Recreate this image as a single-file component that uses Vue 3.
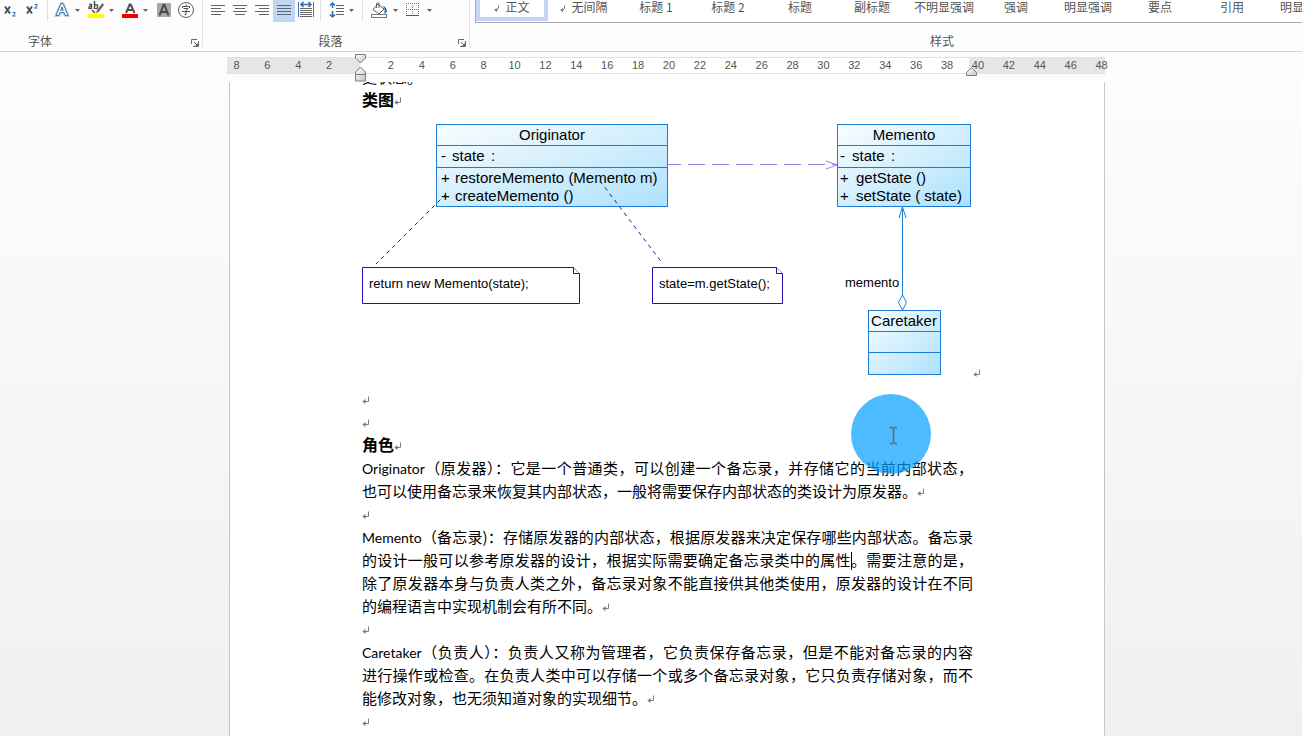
<script setup>
const styles = [
  { name: '正文', mark: true, active: true },
  { name: '无间隔', mark: true },
  { name: '标题 1' },
  { name: '标题 2' },
  { name: '标题' },
  { name: '副标题' },
  { name: '不明显强调' },
  { name: '强调' },
  { name: '明显强调' },
  { name: '要点' },
  { name: '引用' },
  { name: '明显引用' },
]

const ticks = Array.from({ length: 29 }, (_, i) => (i === 4 ? '' : Math.abs(i - 4) * 2))
</script>

<template>
  <div class="app">
    <svg class="defs" width="0" height="0" aria-hidden="true">
      <defs>
        <symbol id="ret" viewBox="0 0 8 9">
          <path d="M6.5 0.5V5.5H2" fill="none" stroke="#7d7d7d" />
          <path d="M0.3 5.5L3.5 3V8Z" fill="#7d7d7d" />
        </symbol>
        <linearGradient id="sky" x1="0" y1="0" x2="1" y2="1">
          <stop offset="0" stop-color="#fafdff" />
          <stop offset="0.5" stop-color="#d3effd" />
          <stop offset="1" stop-color="#ade1fe" />
        </linearGradient>
        <linearGradient id="grip" x1="0" y1="0" x2="1" y2="1">
          <stop offset="0" stop-color="#ffffff" />
          <stop offset="1" stop-color="#c4c4c4" />
        </linearGradient>
      </defs>
    </svg>

    <header class="ribbon">
      <section class="group font-group">
        <div class="tools">
          <button class="tool" aria-label="下标">
            <svg width="22" height="22"><path d="M5 6.5L10 13.500M10 6.500L5 13.500" stroke="#505050" stroke-width="2" /><path d="M12.500 12.500H15V14L12.500 16H15.500" fill="none" stroke="#2f6ea8" /></svg>
          </button>
          <button class="tool" aria-label="上标">
            <svg width="22" height="22"><path d="M5 6.500L10 13.500M10 6.500L5 13.500" stroke="#505050" stroke-width="2" /><path d="M12.500 4.500H15V6L12.500 8H15.500" fill="none" stroke="#2f6ea8" /></svg>
          </button>
          <span class="sep sep-font"></span>
          <button class="tool" aria-label="文本效果">
            <svg width="22" height="22"><path d="M6 15.500L11 3.500H13L18 15.500H15L14 12.500H10L9 15.500ZM10.800 10.300H13.200L12 6.800Z" fill="#fff" stroke="#b9d6f2" stroke-width="3" /><path d="M6 15.500L11 3.500H13L18 15.500H15L14 12.500H10L9 15.500ZM10.800 10.300H13.200L12 6.800Z" fill="#fff" stroke="#3f78ae" /></svg>
          </button>
          <button class="caret" aria-label="文本效果选项"><svg width="12" height="22"><path d="M3 9H8L5.500 12Z" /></svg></button>
          <button class="tool" aria-label="突出显示">
            <svg width="22" height="22"><path d="M5 4.500H7.500V9M7.500 6.500H6Q4.500 7 5 8.500Q6 9 7.500 8M10.500 1V9M10.500 5.500Q12.500 4 13.500 5.500V7.500Q12.500 9.500 10.500 8" fill="none" stroke="#505050" stroke-width="1.400" /><path d="M18.500 3L20 5L15 11.500L12 13.500L13 10Z" fill="#686868" /><path d="M8 10L11 13" stroke="#777" stroke-width="2" /><rect x="4" y="14" width="16" height="4" fill="#ffff00" /></svg>
          </button>
          <button class="caret" aria-label="突出显示选项"><svg width="12" height="22"><path d="M3 9H8L5.500 12Z" /></svg></button>
          <button class="tool" aria-label="字体颜色">
            <svg width="22" height="22"><path d="M8 13L11.700 4.500H12.700L16.500 13M9.500 10H15" fill="none" stroke="#505050" stroke-width="2" /><rect x="4" y="14" width="16" height="4" fill="#f00000" /></svg>
          </button>
          <button class="caret" aria-label="字体颜色选项"><svg width="12" height="22"><path d="M3 9H8L5.500 12Z" /></svg></button>
          <button class="tool" aria-label="字符底纹">
            <svg width="22" height="22"><rect x="5" y="3" width="14" height="14" fill="#a9a9a9" /><path d="M7.500 15.500L11.500 5H12.500L16.500 15.500M9 12H15" fill="none" stroke="#484848" stroke-width="2" /></svg>
          </button>
          <button class="tool" aria-label="带圈字符">
            <svg width="22" height="22"><circle cx="12" cy="10" r="7.500" fill="none" stroke="#5b5b5b" /><path d="M12 4.500V6M8.500 8V6.500H15.500V8M9.500 8.500H14L12 10.500V14.500H10.500M8 11.500H16" fill="none" stroke="#505050" /></svg>
          </button>
        </div>
        <div class="caption">
          <span class="name">字体</span>
          <button class="launch" aria-label="字体设置"><svg width="8" height="8"><path d="M0.500 5V0.500H6M3 3L6 6" fill="none" stroke="#6a6a6a" /><path d="M7.500 2V7.500H2" fill="none" stroke="#6a6a6a" /><path d="M7 4V7H4Z" fill="#6a6a6a" /></svg></button>
        </div>
      </section>

      <section class="group para-group">
        <div class="tools">
          <button class="tool" aria-label="左对齐"><svg width="22" height="22"><path d="M4 5.500H18M4 8.500H14M4 11.500H18M4 14.500H14" stroke="#666" /></svg></button>
          <button class="tool" aria-label="居中"><svg width="22" height="22"><path d="M4 5.500H18M6 8.500H16M4 11.500H18M6 14.500H16" stroke="#666" /></svg></button>
          <button class="tool" aria-label="右对齐"><svg width="22" height="22"><path d="M4 5.500H18M8 8.500H18M4 11.500H18M8 14.500H18" stroke="#666" /></svg></button>
          <button class="tool on" aria-label="两端对齐"><svg width="22" height="22"><path d="M4 5.500H18M4 8.500H18M4 11.500H18M4 14.500H18" stroke="#5b6574" /></svg></button>
          <button class="tool" aria-label="分散对齐"><svg width="22" height="22"><path d="M3.500 2V17M18.500 2V17" stroke="#3f78ae" /><path d="M6 4.500H16M8.500 2L6 4.500L8.500 7M13.500 2L16 4.500L13.500 7" fill="none" stroke="#2f6ea8" stroke-width="1.500" /><path d="M5 8.500H17M5 10.500H17M5 12.500H17M5 14.500H17M5 16.500H17" stroke="#666" /></svg></button>
          <span class="sep"></span>
          <button class="tool" aria-label="行距"><svg width="22" height="22"><path d="M7.500 3V8M7.500 11V17M5 5.500L7.500 3L10 5.500M5 14.500L7.500 17L10 14.500" fill="none" stroke="#2f6ea8" stroke-width="1.500" /><path d="M11 5.500H19M11 8.500H19M11 11.500H19M11 14.500H19" stroke="#666" /></svg></button>
          <button class="caret" aria-label="行距选项"><svg width="12" height="22"><path d="M2 9H7L4.500 12Z" /></svg></button>
          <span class="sep"></span>
          <button class="tool" aria-label="底纹"><svg width="22" height="22"><path d="M11 4L17 9L12 14L6 9.500ZM9.500 8V3.500Q10.500 2 12 3.500V8" fill="#fff" stroke="#5b5b5b" /><path d="M16 6Q20 7 20 12L17.500 14V9Z" fill="#2f6ea8" /><rect x="4.500" y="14.500" width="15" height="3" fill="#fff" stroke="#777" /></svg></button>
          <button class="caret" aria-label="底纹选项"><svg width="12" height="22"><path d="M4 9H9L6.500 12Z" /></svg></button>
          <button class="tool" aria-label="边框"><svg width="22" height="22"><path d="M5 3.500H18M5 9.500H18M5.500 3V15M11.500 3V15M17.500 3V15" stroke="#777" stroke-dasharray="1 1" /><path d="M5 15.500H18" stroke="#555" /></svg></button>
          <button class="caret" aria-label="边框选项"><svg width="12" height="22"><path d="M4 9H9L6.500 12Z" /></svg></button>
        </div>
        <div class="caption">
          <span class="name">段落</span>
          <button class="launch" aria-label="段落设置"><svg width="8" height="8"><path d="M0.500 5V0.500H6M3 3L6 6" fill="none" stroke="#6a6a6a" /><path d="M7.500 2V7.500H2" fill="none" stroke="#6a6a6a" /><path d="M7 4V7H4Z" fill="#6a6a6a" /></svg></button>
        </div>
      </section>

      <section class="group style-group">
        <div class="gallery">
          <button v-for="s in styles" :key="s.name" class="style" :class="{ active: s.active }">
            <svg v-if="s.mark" class="style-mark" width="6" height="7"><path d="M4.500 0.500V3.500L3 5H1.500" fill="none" stroke="#777" /><path d="M0 5L3 3V7Z" fill="#777" /></svg>{{ s.name }}
          </button>
        </div>
        <div class="caption"><span class="name">样式</span></div>
      </section>
    </header>

    <main class="canvas">
      <div class="ruler">
        <div class="ticks"><span v-for="(t, i) in ticks" :key="i">{{ t }}</span></div>
        <svg class="indent first" width="12" height="28"><path d="M0.500 0.500H10.500V4L5.500 9L0.500 4Z" fill="url(#grip)" stroke="#7c7c7c" /><path d="M5.500 13L10.500 18V27H0.500V18Z" fill="url(#grip)" stroke="#7c7c7c" /><path d="M0.500 20.500H10.500" stroke="#7c7c7c" /></svg>
        <svg class="indent last" width="12" height="10"><path d="M5.500 0.700L10.500 5.500V8.500H0.500V5.500Z" fill="url(#grip)" stroke="#7c7c7c" /></svg>
      </div>

      <article class="page">
        <div class="doc">
          <p class="line cut">史状态。<svg class="ret"><use href="#ret" /></svg></p>
          <h2 class="line">类图<svg class="ret"><use href="#ret" /></svg></h2>
          <div class="figure">
            <svg class="uml" width="611" height="274" viewBox="0 0 611 274" role="img" aria-label="备忘录模式类图">
              <g fill="url(#sky)" stroke="#1c7cd6">
                <rect x="74.500" y="11.500" width="231" height="82" />
                <rect x="475.500" y="11.500" width="133" height="82" />
                <rect x="506.500" y="197.500" width="72" height="64" />
                <path fill="none" d="M74 32.500H306M74 54.500H306M475 32.500H609M475 54.500H609M506 218.500H579M506 239.500H579" />
              </g>
              <g class="label">
                <text x="190" y="27" text-anchor="middle">Originator</text>
                <text x="79" y="48">-</text><text x="90" y="48">state</text><text x="129" y="48">:</text>
                <text x="79" y="70">+</text><text x="93" y="70">restoreMemento (Memento m)</text>
                <text x="79" y="88">+</text><text x="93" y="88">createMemento ()</text>
                <text x="542" y="27" text-anchor="middle">Memento</text>
                <text x="478" y="48">-</text><text x="490" y="48">state</text><text x="529" y="48">:</text>
                <text x="478" y="70">+</text><text x="494" y="70">getState ()</text>
                <text x="478" y="88">+</text><text x="494" y="88">setState ( state)</text>
                <text x="542" y="213" text-anchor="middle">Caretaker</text>
              </g>
              <path d="M306 51.500H475" stroke="#9a80e4" stroke-dasharray="17 7" stroke-dashoffset="4" />
              <path d="M464 48L475 52L464 56" fill="none" stroke="#9a80e4" />
              <path d="M84 81L14 151M238 68L301 151" fill="none" stroke="#2418a8" stroke-dasharray="4 4" />
              <g fill="#fff" stroke="#1c12ae">
                <path d="M0.500 154.500H211.500L217.500 160.500V190.500H0.500Z" />
                <path d="M211.500 154.500V160.500H217.500" />
                <path d="M290.500 154.500H414.500L420.500 160.500V190.500H290.500Z" />
                <path d="M414.500 154.500V160.500H420.500" />
              </g>
              <g class="note">
                <text x="7" y="175">return new Memento(state);</text>
                <text x="297" y="175">state=m.getState();</text>
                <text x="483" y="174">memento</text>
              </g>
              <path d="M540.500 182V94M537 105L540.500 94L544 105" fill="none" stroke="#1c7cd6" />
              <path d="M540.500 182L544.500 189.500L540.500 197L536.500 189.500Z" fill="#fff" stroke="#1c7cd6" />
            </svg>
            <svg class="ret figure-ret"><use href="#ret" /></svg>
          </div>
          <p class="line"><svg class="ret"><use href="#ret" /></svg></p>
          <p class="line"><svg class="ret"><use href="#ret" /></svg></p>
          <h2 class="line">角色<svg class="ret"><use href="#ret" /></svg></h2>
          <p class="line full"><span class="latin">Originator</span>（原发器）：它是一个普通类，可以创建一个备忘录，并存储它的当前内部状态，</p>
          <p class="line">也可以使用备忘录来恢复其内部状态，一般将需要保存内部状态的类设计为原发器。<svg class="ret"><use href="#ret" /></svg></p>
          <p class="line"><svg class="ret"><use href="#ret" /></svg></p>
          <p class="line full"><span class="latin">Memento</span>（备忘录)：存储原发器的内部状态，根据原发器来决定保存哪些内部状态。备忘录</p>
          <p class="line full">的设计一般可以参考原发器的设计，根据实际需要确定备忘录类中的属性<i class="cursor"></i>。需要注意的是，</p>
          <p class="line full">除了原发器本身与负责人类之外，备忘录对象不能直接供其他类使用，原发器的设计在不同</p>
          <p class="line">的编程语言中实现机制会有所不同。<svg class="ret"><use href="#ret" /></svg></p>
          <p class="line"><svg class="ret"><use href="#ret" /></svg></p>
          <p class="line full"><span class="latin">Caretaker</span>（负责人）：负责人又称为管理者，它负责保存备忘录，但是不能对备忘录的内容</p>
          <p class="line full">进行操作或检查。在负责人类中可以存储一个或多个备忘录对象，它只负责存储对象，而不</p>
          <p class="line">能修改对象，也无须知道对象的实现细节。<svg class="ret"><use href="#ret" /></svg></p>
          <p class="line"><svg class="ret"><use href="#ret" /></svg></p>
        </div>
        <div class="pointer">
          <svg width="80" height="80"><path d="M39 33.500H42M43 33.500H46M42.500 34V49M39 49.500H42M43 49.500H46" fill="none" stroke="#6d6458" stroke-width="1.500" /></svg>
        </div>
      </article>
    </main>
  </div>
</template>

<style>
body {
  margin: 0;
  overflow: hidden;
}
</style>

<style scoped>
.app {
  display: flex;
  flex-direction: column;
  min-height: 100vh;
  background: #fdfdfd;
  color: #000;
  font-family: "Noto Sans CJK SC", sans-serif;
}

.defs {
  position: absolute;
}

button {
  margin: 0;
  padding: 0;
  border: 0;
  background: none;
  color: inherit;
  font: inherit;
}

svg {
  display: block;
}

.ribbon {
  display: flex;
  overflow: hidden;
  border-bottom: 1px solid #d2d2d2;
  background: #fdfdfd;
  color: #555;
  font-size: 12px;
}

.group {
  display: flex;
  flex: none;
  flex-direction: column;
  box-sizing: border-box;
  height: 51px;
}

.font-group {
  width: 203px;
}

.para-group {
  width: 267px;
}

.font-group,
.para-group {
  background: linear-gradient(#e1e1e1, #e1e1e1) right top / 1px 47px no-repeat;
}

.para-group .tools {
  padding-left: 4px;
}

.style-group {
  width: 948px;
}

.tools {
  display: flex;
  height: 23px;
}

.tool {
  width: 22px;
  height: 22px;
}

.tool.on {
  background: #c2d5f2;
}

.caret {
  width: 12px;
  height: 22px;
  fill: #666;
}

.sep {
  width: 1px;
  height: 21px;
  margin: 0 4px 0 3px;
  background: #e1e1e1;
}

.sep-font {
  margin: 0 2px 0 3px;
}

.caption {
  display: flex;
  align-items: center;
  height: 20px;
  margin-top: 7px;
  padding-right: 4px;
}

.name {
  flex: 1;
  text-align: center;
}

.font-group .name {
  padding-left: 28px;
  text-align: left;
}

.launch {
  padding: 6px 0 0;
}

.gallery {
  display: flex;
  box-sizing: border-box;
  height: 23px;
  margin-left: 5px;
  border-bottom: 1px solid #ababab;
  border-left: 1px solid #ababab;
  background: #fff;
}

.style {
  display: flex;
  flex: 0 0 72px;
  align-items: flex-start;
  justify-content: center;
  gap: 5px;
  box-sizing: border-box;
  height: 21px;
  line-height: 14px;
  white-space: nowrap;
}

.style-mark {
  margin-top: 5px;
}

.style.active {
  border: 4px solid #c2d5f2;
  border-top: 0;
}

.canvas {
  display: flex;
  flex: 1;
  flex-direction: column;
  padding: 5px 197px 0 227px;
  background: linear-gradient(#fdfdfd, #f0f0f0);
}

.ruler {
  position: relative;
  height: 17px;
  background: linear-gradient(90deg, #e6e6e6 133px, #fff 133px, #fff calc(100% - 136px), #e6e6e6 calc(100% - 136px));
  box-shadow: inset 0 1px #e1e1e1, inset 0 -1px #e1e1e1;
}

.ticks {
  display: grid;
  grid-template-columns: repeat(29, 1fr);
  margin: 0 -12px 0 -6px;
  color: #555;
  font: 11px/17px "Liberation Sans", sans-serif;
  text-align: center;
}

.indent {
  position: absolute;
}

.indent.first {
  top: -3px;
  left: 128px;
}

.indent.last {
  right: 127px;
  bottom: -3px;
}

.page {
  position: relative;
  flex: 1;
  margin: 8px 0 0 2px;
  overflow: hidden;
  border-right: 1px solid #c6c6c6;
  border-left: 1px solid #c6c6c6;
  background: #fff;
}

.doc {
  padding: 0 131px 0 132px;
}

.line {
  height: 23px;
  margin: 0;
  font-size: 15px;
  font-weight: 400;
  line-height: 23px;
}

h2.line {
  font-size: 16px;
  font-weight: 700;
}

.cut {
  margin-top: -17px;
}

.full {
  text-align: justify;
  text-align-last: justify;
}

.latin {
  font-family: Lato, sans-serif;
  font-size: 14px;
}

.ret {
  display: inline-block;
  width: 8px;
  height: 9px;
}

.figure {
  position: relative;
  height: 274px;
  margin-top: 2px;
}

.uml {
  overflow: visible;
}

.figure-ret {
  position: absolute;
  top: 256px;
  left: 611px;
}

.label {
  font: 15px "Liberation Sans", sans-serif;
}

.note {
  font: 13px "Liberation Sans", sans-serif;
}

.cursor {
  display: inline-block;
  width: 1px;
  height: 18px;
  margin-right: -1px;
  background: #000;
  vertical-align: -4px;
}

.pointer {
  position: absolute;
  top: 312px;
  left: 621px;
  width: 80px;
  height: 80px;
  border-radius: 50%;
  background: rgba(0, 158, 255, 0.7);
}
</style>
